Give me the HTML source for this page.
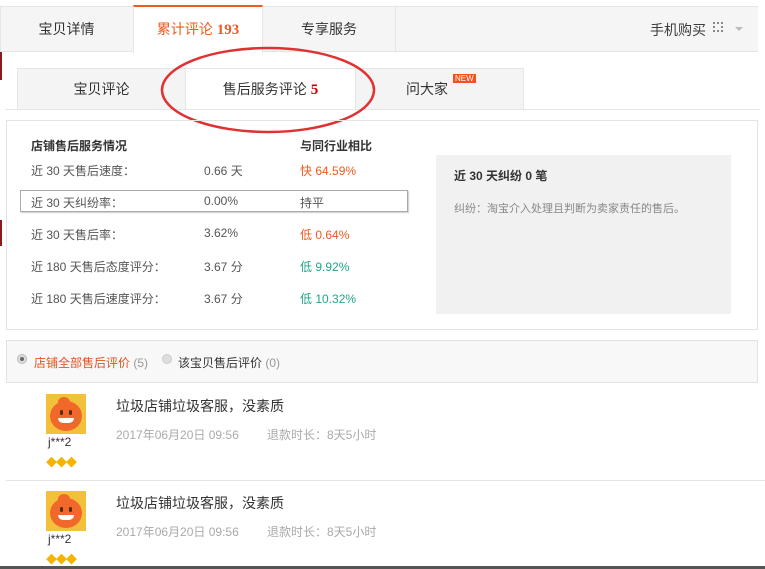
<!DOCTYPE html><html><head><meta charset="utf-8"><style>
body{margin:0;width:765px;height:569px;background:#fff;position:relative;overflow:hidden;font-family:"Liberation Sans","Noto Sans CJK SC",sans-serif;font-size:12px;color:#3c3c3c}
.a{position:absolute;white-space:nowrap}
.tab{position:absolute;top:7px;height:45px;line-height:44px;text-align:center;font-size:14px;color:#333}
.st{position:absolute;top:68px;height:41px;line-height:41px;text-align:center;font-size:14px;color:#333;background:#f4f4f4;border:1px solid #e5e5e5;border-bottom:none;box-sizing:border-box}
.r{position:absolute;font-size:12px;color:#555;white-space:nowrap}
.av{position:absolute;width:40px;height:40px;background:#f3c03b;overflow:hidden}
.av i{position:absolute;left:4px;top:7px;width:32px;height:30px;border-radius:50%;background:#f0682a}
.av u{position:absolute;left:12px;top:3px;width:12px;height:10px;border-radius:50% 50% 0 50%;background:#f0682a}
.av b{position:absolute;left:12px;top:24px;width:16px;height:5px;border-radius:0 0 8px 8px;background:#fff}
.av s{position:absolute;top:16px;width:3px;height:5px;background:#5a2a10;border-radius:2px}
</style></head><body>
<div class="a" style="left:0;top:6px;width:758px;height:46px;background:#f5f5f5;border:1px solid #e5e5e5;border-right:none;box-sizing:border-box"></div>
<div class="tab" style="left:0;width:133px">宝贝详情</div>
<div class="tab" style="left:133px;width:130px;top:5px;height:48px;background:#fff;border-top:2px solid #f05a1e;border-left:1px solid #e5e5e5;border-right:1px solid #e5e5e5;box-sizing:border-box;color:#f05a1e;line-height:44px">累计评论 <b style="font-family:'Liberation Serif',serif;font-size:15px">193</b></div>
<div class="tab" style="left:263px;width:132px;border-right:1px solid #e5e5e5">专享服务</div>
<div class="a" style="left:650px;top:20px;font-size:14px">手机购买</div>
<div class="a" style="left:713px;top:22px;width:10px;height:10px;border:2px dotted #888;box-sizing:border-box"></div>
<div class="a" style="left:735px;top:27px;border:4px solid transparent;border-top-color:#bbb"></div>
<div class="a" style="left:0;top:52px;width:2px;height:28px;background:#8b1a1a"></div>
<div class="a" style="left:0;top:220px;width:2px;height:26px;background:#8b1a1a"></div>
<div class="st" style="left:17px;width:169px">宝贝评论</div>
<div class="st" style="left:185px;width:171px;background:#fff;height:42px">售后服务评论 <b style="color:#c00;font-family:'Liberation Serif',serif;font-size:15px">5</b></div>
<div class="st" style="left:355px;width:169px;text-align:left;padding-left:50px">问大家</div>
<div class="a" style="left:453px;top:74px;background:#f4511e;color:#fff;font-size:8px;line-height:9px;padding:0 2px">NEW</div>
<div class="a" style="left:5px;top:109px;width:755px;height:1px;background:#e5e5e5"></div>
<svg class="a" style="left:160px;top:44px" width="220" height="90"><ellipse cx="108" cy="46" rx="106" ry="42" fill="none" stroke="#e03232" stroke-width="2.5"/></svg>
<div class="a" style="left:6px;top:120px;width:752px;height:210px;border:1px solid #e3e3e3;box-sizing:border-box"></div>
<div class="r" style="left:31px;top:137px;font-weight:bold;color:#333">店铺售后服务情况</div>
<div class="r" style="left:300px;top:137px;font-weight:bold;color:#333">与同行业相比</div>
<div class="a" style="left:20px;top:190px;width:388px;height:22px;border:1px solid #aaa;box-shadow:1px 1px 1px #ccc;box-sizing:border-box"></div>
<div class="r" style="left:31px;top:162px">近 30 天售后速度：</div><div class="r" style="left:204px;top:162px">0.66 天</div><div class="r" style="left:300px;top:162px;color:#f05a1e">快 64.59%</div>
<div class="r" style="left:31px;top:194px">近 30 天纠纷率：</div><div class="r" style="left:204px;top:194px">0.00%</div><div class="r" style="left:300px;top:194px">持平</div>
<div class="r" style="left:31px;top:226px">近 30 天售后率：</div><div class="r" style="left:204px;top:226px">3.62%</div><div class="r" style="left:300px;top:226px;color:#f05a1e">低 0.64%</div>
<div class="r" style="left:31px;top:258px">近 180 天售后态度评分：</div><div class="r" style="left:204px;top:258px">3.67 分</div><div class="r" style="left:300px;top:258px;color:#1fa68a">低 9.92%</div>
<div class="r" style="left:31px;top:290px">近 180 天售后速度评分：</div><div class="r" style="left:204px;top:290px">3.67 分</div><div class="r" style="left:300px;top:290px;color:#1fa68a">低 10.32%</div>
<div class="a" style="left:436px;top:155px;width:295px;height:159px;background:#f1f1f1"></div>
<div class="r" style="left:454px;top:167px;font-weight:bold;color:#333">近 30 天纠纷 0 笔</div>
<div class="r" style="left:454px;top:200px;color:#888;font-size:11px">纠纷：淘宝介入处理且判断为卖家责任的售后。</div>
<div class="a" style="left:6px;top:340px;width:752px;height:43px;background:#f8f8f8;border:1px solid #e3e3e3;box-sizing:border-box"></div>
<div class="a" style="left:17px;top:354px;width:10px;height:10px;border-radius:50%;background:#ddd;border:1px solid #bbb;box-sizing:border-box"><div style="margin:2px;width:4px;height:4px;border-radius:50%;background:#666"></div></div>
<div class="r" style="left:34px;top:354px;color:#e4531e">店铺全部售后评价 <span style="color:#999">(5)</span></div>
<div class="a" style="left:162px;top:354px;width:10px;height:10px;border-radius:50%;background:#ddd;border:1px solid #ccc;box-sizing:border-box"></div>
<div class="r" style="left:178px;top:354px;color:#333">该宝贝售后评价 <span style="color:#999">(0)</span></div>
<div class="av" style="left:46px;top:394px"><u></u><i></i><s style="left:14px"></s><s style="left:23px"></s><b></b></div>
<div class="r" style="left:48px;top:435px;color:#333">j***2</div>
<div class="r" style="left:46px;top:454px;color:#f5b400;font-size:11px;letter-spacing:-1px">◆◆◆</div>
<div class="r" style="left:116px;top:396px;font-size:14px;color:#333">垃圾店铺垃圾客服，没素质</div>
<div class="r" style="left:116px;top:426px;color:#aaa">2017年06月20日 09:56</div><div class="r" style="left:267px;top:426px;color:#aaa">退款时长：8天5小时</div>
<div class="a" style="left:6px;top:480px;width:759px;height:1px;background:#e3e3e3"></div>
<div class="av" style="left:46px;top:491px"><u></u><i></i><s style="left:14px"></s><s style="left:23px"></s><b></b></div>
<div class="r" style="left:48px;top:532px;color:#333">j***2</div>
<div class="r" style="left:46px;top:551px;color:#f5b400;font-size:11px;letter-spacing:-1px">◆◆◆</div>
<div class="r" style="left:116px;top:493px;font-size:14px;color:#333">垃圾店铺垃圾客服，没素质</div>
<div class="r" style="left:116px;top:523px;color:#aaa">2017年06月20日 09:56</div><div class="r" style="left:267px;top:523px;color:#aaa">退款时长：8天5小时</div>
<div class="a" style="left:0;top:566px;width:765px;height:3px;background:#555"></div>
</body></html>
